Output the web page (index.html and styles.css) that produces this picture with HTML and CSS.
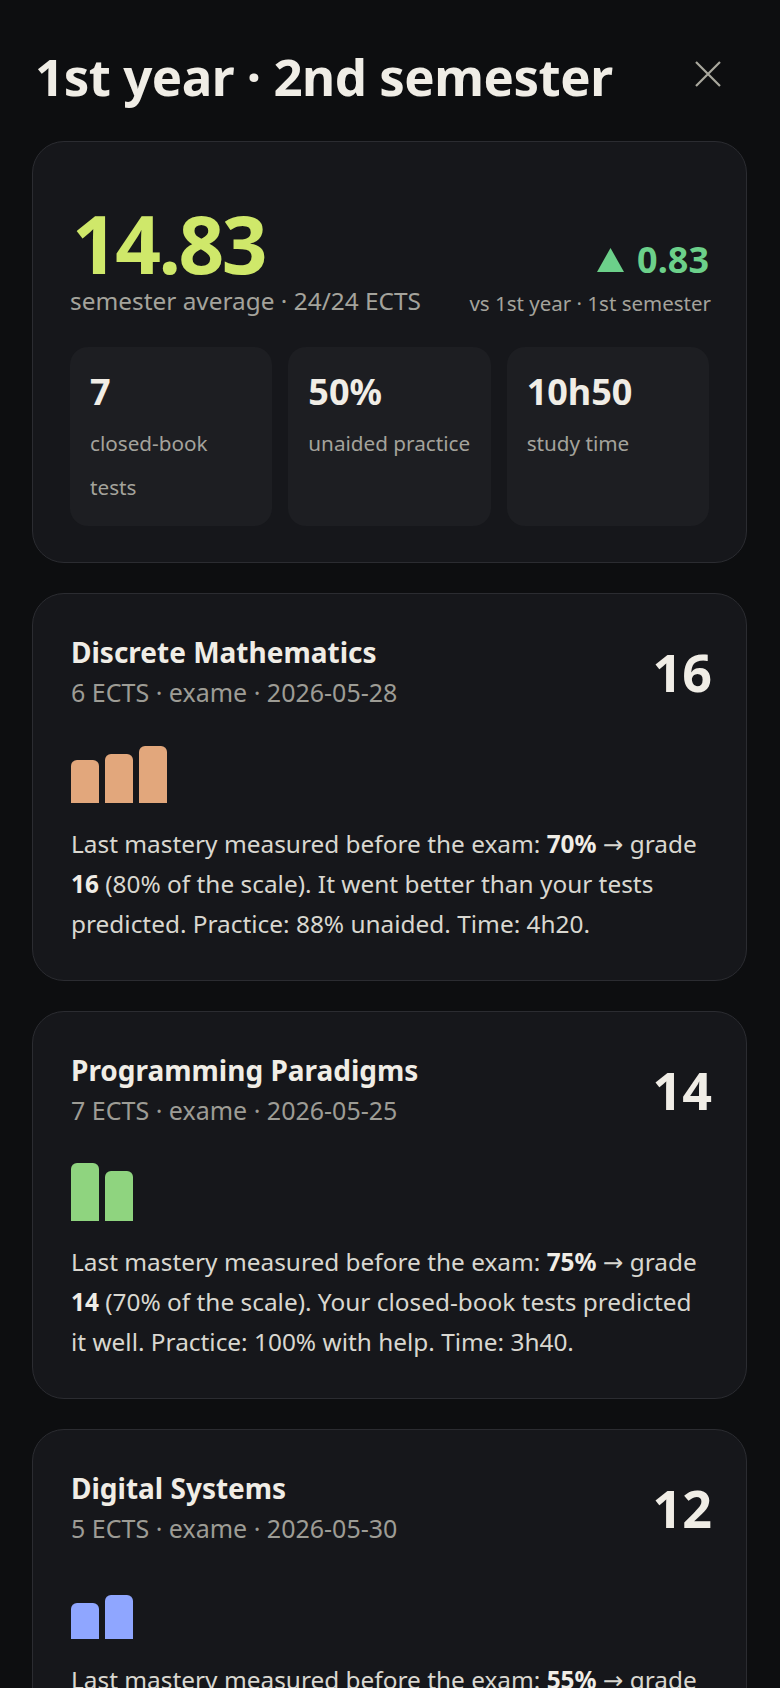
FILE: index.html
```html
<!DOCTYPE html>
<html lang="en">
<head>
<meta charset="utf-8">
<title>1st year · 2nd semester</title>
<link rel="stylesheet" href="styles.css">
</head>
<body>
<div class="page">
  <header class="head">
    <h1 class="head-title">1st year · 2nd semester</h1>
    <button class="close" aria-label="Close">
      <svg width="26" height="26" viewBox="0 0 26 26"><path d="M1 1 L25 25 M25 1 L1 25" stroke="#a9a89e" stroke-width="2.2" fill="none"/></svg>
    </button>
  </header>

  <section class="card summary">
    <div class="sum-top">
      <div class="avg">
        <div class="avg-num">14.83</div>
        <div class="avg-label">semester average · 24/24 ECTS</div>
      </div>
      <div class="delta">
        <div class="delta-num"><svg class="tri" width="27" height="24" viewBox="0 0 27 24"><polygon points="13.5,0 27,24 0,24" fill="#6cd08a"/></svg><span>0.83</span></div>
        <div class="delta-label">vs 1st year · 1st semester</div>
      </div>
    </div>
    <div class="stats">
      <div class="tile"><div class="tile-val">7</div><div class="tile-label">closed-book tests</div></div>
      <div class="tile"><div class="tile-val">50%</div><div class="tile-label">unaided practice</div></div>
      <div class="tile"><div class="tile-val">10h50</div><div class="tile-label">study time</div></div>
    </div>
  </section>

  <article class="card course">
    <div class="course-head">
      <div class="course-info">
        <h2 class="course-name">Discrete Mathematics</h2>
        <div class="course-meta">6 ECTS · exame · 2026-05-28</div>
      </div>
      <div class="grade">16</div>
    </div>
    <div class="bars">
      <span class="bar bar-orange" style="height:43px"></span>
      <span class="bar bar-orange" style="height:49px"></span>
      <span class="bar bar-orange" style="height:57px"></span>
    </div>
    <p class="course-text">Last mastery measured before the exam: <b>70%</b> → grade <b>16</b> (80% of the scale). It went better than your tests predicted. Practice: 88% unaided. Time: 4h20.</p>
  </article>

  <article class="card course">
    <div class="course-head">
      <div class="course-info">
        <h2 class="course-name">Programming Paradigms</h2>
        <div class="course-meta">7 ECTS · exame · 2026-05-25</div>
      </div>
      <div class="grade">14</div>
    </div>
    <div class="bars">
      <span class="bar bar-green" style="height:58px"></span>
      <span class="bar bar-green" style="height:50px"></span>
    </div>
    <p class="course-text">Last mastery measured before the exam: <b>75%</b> → grade <b>14</b> (70% of the scale). Your closed-book tests predicted it well. Practice: 100% with help. Time: 3h40.</p>
  </article>

  <article class="card course">
    <div class="course-head">
      <div class="course-info">
        <h2 class="course-name">Digital Systems</h2>
        <div class="course-meta">5 ECTS · exame · 2026-05-30</div>
      </div>
      <div class="grade">12</div>
    </div>
    <div class="bars">
      <span class="bar bar-blue" style="height:36px"></span>
      <span class="bar bar-blue" style="height:44px"></span>
    </div>
    <p class="course-text">Last mastery measured before the exam: <b>55%</b> → grade <b>12</b> (60% of the scale). Your closed-book tests predicted it well. Practice: 50% unaided. Time: 2h50.</p>
  </article>
</div>
</body>
</html>
```
FILE: styles.css
```css
* { box-sizing: border-box; }
html, body { margin: 0; padding: 0; }
body {
  background: #0d0e10;
  color: #d9d7d0;
  font-family: "Noto Sans", "Open Sans", "DejaVu Sans", sans-serif;
}
.page {
  padding: 46px 33px 40px 32px;
}
.head {
  display: flex;
  align-items: center;
  justify-content: space-between;
  height: 60px;
  margin-bottom: 35px;
}
.head-title {
  margin: 0;
  font-size: 51px;
  line-height: 60px;
  font-weight: 700;
  color: #f0ede6;
  letter-spacing: -0.5px;
  padding-left: 3px;
}
.close {
  background: none;
  border: 0;
  padding: 0;
  margin-right: 26px;
  margin-top: -5px;
  width: 26px;
  height: 26px;
  display: flex;
}
.card {
  background: #16171b;
  border: 1px solid #2b2c31;
  border-radius: 32px;
}
.summary {
  padding: 61px 37px 36px 37px;
}
.sum-top {
  display: flex;
  justify-content: space-between;
  align-items: flex-end;
}
.avg-num {
  font-size: 80px;
  line-height: 80px;
  font-weight: 700;
  color: #cfe86a;
  letter-spacing: -2.5px;
  padding-left: 2px;
}
.avg-label {
  font-size: 24.4px;
  line-height: 37px;
  color: #a4a39c;
  margin-top: -1px;
}
.delta {
  text-align: right;
}
.delta-num {
  display: flex;
  justify-content: flex-end;
  align-items: center;
  gap: 13px;
  font-size: 36px;
  line-height: 40px;
  font-weight: 700;
  color: #6cd08a;
  margin-bottom: 8px;
}
.tri { display: block; }
.delta-label {
  font-size: 20.5px;
  line-height: 30px;
  color: #a4a39c;
  margin-bottom: 1px;
  margin-right: -2px;
}
.stats {
  margin-top: 28px;
  display: grid;
  grid-template-columns: repeat(3, 1fr);
  gap: 16px;
}
.tile {
  background: #1d1e22;
  border-radius: 18px;
  padding: 23px 20px 17px 20px;
}
.tile-val {
  font-size: 36px;
  line-height: 44px;
  font-weight: 700;
  color: #f0ede6;
}
.tile-label {
  margin-top: 7px;
  font-size: 20.7px;
  line-height: 44px;
  color: #a4a39c;
}
.course {
  margin-top: 30px;
  padding: 38px 38px 36px 38px;
}
.course-head {
  display: flex;
  justify-content: space-between;
  align-items: center;
}
.course-name {
  margin: 0;
  font-size: 28px;
  line-height: 40px;
  font-weight: 700;
  color: #f0ede6;
}
.course-meta {
  font-size: 25px;
  line-height: 40px;
  color: #9d9c95;
}
.grade {
  font-size: 52px;
  line-height: 52px;
  font-weight: 700;
  color: #f0ede6;
  margin-right: -4px;
}
.bars {
  margin-top: 31px;
  height: 60px;
  display: flex;
  align-items: flex-end;
  gap: 6px;
}
.bar {
  display: block;
  width: 28px;
  border-radius: 6px 6px 0 0;
}
.bar-orange { background: #e2a77c; }
.bar-green { background: #8fd47f; }
.bar-blue { background: #8fa6ff; }
.course-text {
  margin: 21px 0 0 0;
  font-size: 24.4px;
  line-height: 40px;
  color: #d9d7d0;
}
.course-text b {
  font-weight: 700;
  color: #f0ede6;
}
```
